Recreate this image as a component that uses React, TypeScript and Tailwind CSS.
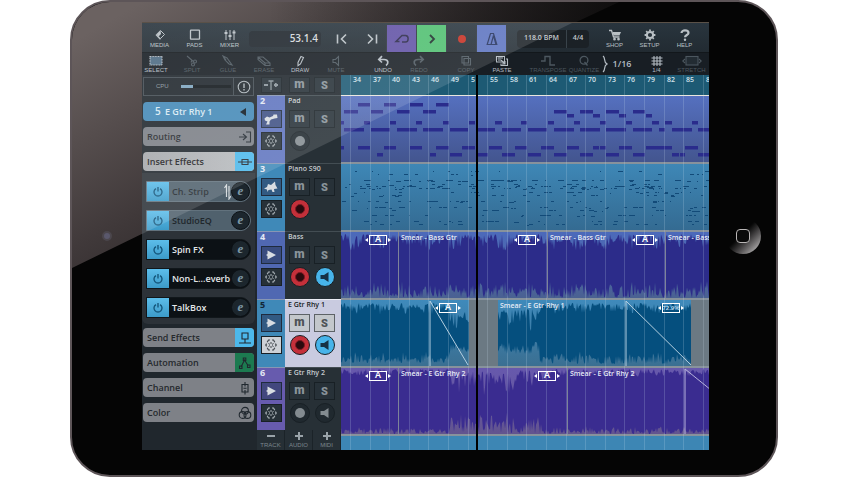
import React from "react";

/* ---------- helpers ---------- */

function seeded(seed: number) {
  let s = seed;
  return () => {
    s = (s * 1664525 + 1013904223) % 4294967296;
    return s / 4294967296;
  };
}

type Band = { from: number; to: number; top: [number, number]; bottom: [number, number] };

function wavePath(bands: Band[], seed: number) {
  const rnd = seeded(seed);
  const up: string[] = [];
  const down: string[] = [];
  bands.forEach((b) => {
    for (let x = b.from; x <= b.to; x += 1) {
      const swell = 0.8 + 0.2 * Math.sin(x / 4 + seed);
      const t = b.top[0] + (b.top[1] - b.top[0]) * Math.pow(rnd(), 1.3) * swell;
      const d = b.bottom[1] - (b.bottom[1] - b.bottom[0]) * Math.pow(rnd(), 1.3) * swell;
      up.push(`${x} ${t.toFixed(1)}`);
      down.unshift(`${x} ${d.toFixed(1)}`);
    }
  });
  return `M${up.join("L")}L${down.join("L")}Z`;
}

/* ---------- toolbar ---------- */

const tiny = "text-[6px] leading-[7px] whitespace-nowrap";

function TopItem({ label, children }: { label: string; children: React.ReactNode }) {
  return (
    <button className="flex w-[35px] flex-col items-center gap-px text-[#b9c0c5]">
      <svg viewBox="0 0 14 12" className="h-3 w-3.5" fill="none" stroke="currentColor" strokeWidth="1.3">
        {children}
      </svg>
      <span className={tiny}>{label}</span>
    </button>
  );
}

function Transport({ label, className = "", children }: { label: string; className?: string; children: React.ReactNode }) {
  return (
    <button aria-label={label} className={`flex h-[27px] w-[30px] items-center justify-center border-r border-[#2c343b] ${className}`}>
      <svg viewBox="0 0 16 16" className="h-4 w-4" fill="none" stroke="currentColor" strokeWidth="1.6">
        {children}
      </svg>
    </button>
  );
}

function TopBar() {
  return (
    <div className="flex h-[29px] items-center bg-linear-to-b from-[#29353e] to-[#222b32] pt-0.5">
      <TopItem label="MEDIA">
        <path d="M7.5 1.5 11.5 5.5 7.5 9.5" strokeWidth="1" />
        <path d="M7.5 1 3.5 5 5.5 7.5 8 5Z" fill="currentColor" stroke="none" />
        <path d="M3 5.5 7.5 10.3" strokeWidth="1.4" />
      </TopItem>
      <TopItem label="PADS">
        <rect x="2.5" y="1.2" width="9" height="9" rx="0.5" />
      </TopItem>
      <TopItem label="MIXER">
        <path d="M3 1V11M7 1V11M11 1V11" strokeWidth="1" />
        <path d="M1.5 4H4.5M5.5 7H8.5M9.5 3.5H12.5" strokeWidth="2" />
      </TopItem>
      <output className="ml-0.5 flex h-4 w-[72px] items-center justify-end rounded-sm bg-[#1f262d] pr-[3px] font-['Open_Sans',sans-serif] text-[10px] font-semibold text-[#d5d9dc]">
        53.1.4
      </output>
      <div className="ml-1.5 flex text-[#b9c0c5]">
        <Transport label="Previous" className="border-transparent">
          <path d="M3.5 3.5V12.5M12 3.5 7.5 8 12 12.5" />
        </Transport>
        <Transport label="Next">
          <path d="M12.5 3.5V12.5M4 3.5 8.5 8 4 12.5" />
        </Transport>
        <Transport label="Cycle" className="bg-[#6152a5] text-[#2a2849]">
          <path d="M8 11H11.5C15 11 15 4.5 11.5 4.5H8L2 10.5H5.5" strokeWidth="1.5" />
        </Transport>
        <Transport label="Play" className="bg-[#4fbf70] text-[#1d2d2b]">
          <path d="M6 4 10 8 6 12" strokeWidth="1.8" />
        </Transport>
        <Transport label="Record" className="text-[#c62f22]">
          <circle cx="8" cy="8" r="3.2" fill="currentColor" />
        </Transport>
        <Transport label="Metronome" className="bg-[#5c73c0] text-[#22305c]">
          <path d="M6.5 2.5H9.5L12.8 13.5H3.2ZM7 13.5 9.5 4.5M9.5 4.5 12 13.5" strokeWidth="1.2" />
        </Transport>
      </div>
      <div className="ml-2.5 flex h-[18px] w-[72px] items-center rounded-sm bg-[#1b2126] font-['Open_Sans',sans-serif] text-[7px] font-semibold text-[#c3c8cc]">
        <span className="flex-1 whitespace-nowrap text-center">118.0 BPM</span>
        <span className="h-full w-px bg-[#39434a]" />
        <span className="w-[22px] text-center">4/4</span>
      </div>
      <div className="ml-auto mr-[7px] flex">
        <TopItem label="SHOP">
          <path d="M1 1.5H3.5L5.5 8H11.5" />
          <path d="M4.5 3H13L11.5 6.5H5.5Z" fill="currentColor" stroke="none" />
          <circle cx="6.5" cy="10.2" r="0.7" fill="currentColor" />
          <circle cx="10.5" cy="10.2" r="0.7" fill="currentColor" />
        </TopItem>
        <TopItem label="SETUP">
          <circle cx="7" cy="6" r="3.1" strokeWidth="2" />
          <path d="M7 .6V2M7 10V11.4M1.6 6H3M11 6H12.4M3.2 2.2 4.2 3.2M9.8 8.8 10.8 9.8M3.2 9.8 4.2 8.8M9.8 3.2 10.8 2.2" strokeWidth="1.8" />
        </TopItem>
        <TopItem label="HELP">
          <path d="M3.5 4C3.5 .6 10.5 .6 10.5 4 10.5 6 7 6 7 8.3" strokeWidth="2.2" />
          <circle cx="7" cy="10.7" r="1.2" fill="currentColor" stroke="none" />
        </TopItem>
      </div>
    </div>
  );
}

function Tool({
  label,
  on = false,
  className = "w-9",
  children,
}: {
  label: string;
  on?: boolean;
  className?: string;
  children: React.ReactNode;
}) {
  return (
    <button className={`flex flex-col items-center ${on ? "text-[#b4bcc3]" : "text-[#4c575f]"} ${className}`}>
      <svg viewBox="0 0 20 12" className="h-3 w-5" fill="none" stroke="currentColor" strokeWidth="1.1">
        {children}
      </svg>
      <span className={tiny}>{label}</span>
    </button>
  );
}

function ToolBar() {
  return (
    <div className="flex h-[23px] items-center overflow-hidden border-t border-[#12171b] bg-[#181e24]">
      <Tool label="SELECT" on className="w-7">
        <rect x="4" y="1.5" width="12" height="8.5" fill="#4d6b83" strokeDasharray="1 0.6" />
      </Tool>
      <div className="ml-1 flex">
        <Tool label="SPLIT">
          <path d="M5 1 12 7M9 7.5 10 5" />
          <circle cx="13" cy="6.5" r="1.5" />
          <circle cx="11" cy="9.5" r="1.5" />
        </Tool>
        <Tool label="GLUE">
          <path d="M5 1 9 3 14 10 11 9 7 5ZM5 1 8 5" />
        </Tool>
        <Tool label="ERASE">
          <path d="M4 2H9L16 8V10.5H11L4 4.5ZM4 2 11 8H16M11 8V10" />
        </Tool>
        <Tool label="DRAW" on>
          <path d="M11 1.5 13.5 2.5 10.5 9 8 10.8 8 7.5Z" />
        </Tool>
        <Tool label="MUTE">
          <path d="M7 4.5H9.5L12.5 1.5V10.5L9.5 7.5H7Z" />
        </Tool>
      </div>
      <div className="ml-[11px] flex">
        <Tool label="UNDO" on>
          <path d="M6 4.5H11C16 4.5 15.5 9 13 10.5M9 1.2 5.8 4.5 9 7.5" strokeWidth="1.7" />
        </Tool>
        <Tool label="REDO">
          <path d="M14 4.5H9C4 4.5 4.5 9 7 10.5M11 1.2 14.2 4.5 11 7.5" strokeWidth="1.7" />
        </Tool>
      </div>
      <div className="ml-[11px] flex">
        <Tool label="COPY">
          <path d="M6 1.5H12.5V8H6ZM8 3.5H14.5V10H8Z" />
        </Tool>
        <Tool label="PASTE" on>
          <path d="M4.5 1.5H12.5V7H4.5ZM14 4H15.5V10.5H9V8.5" />
          <path d="M6 3H11M6 5H9M9 5 13 9M13 6V9H10" />
        </Tool>
      </div>
      <div className="ml-2.5 flex">
        <Tool label="TRANSPOSE">
          <path d="M3 6H7V1.5H12V10H17" strokeWidth="1.4" />
        </Tool>
        <Tool label="QUANTIZE">
          <circle cx="10" cy="5.2" r="3.9" strokeWidth="1.3" />
          <path d="M10.5 7 13.5 10.5" strokeWidth="1.3" />
        </Tool>
      </div>
      <svg viewBox="0 0 6 18" className="h-[18px] w-1.5 text-[#b4bcc3]" fill="none" stroke="currentColor">
        <path d="M1 1C4 3 1 7 5 9 1 11 4 15 1 17" strokeWidth="1.2" />
      </svg>
      <span className="w-7 text-center font-['Open_Sans',sans-serif] text-[9px] font-semibold text-[#b4bcc3]">1/16</span>
      <div className="flex flex-1 justify-end">
        <Tool label="1/4" on className="w-[35px]">
          <path d="M7 1V11M10 1V11M13 1V11M4.5 3H15.5M4.5 6H15.5M4.5 9H15.5" />
        </Tool>
        <Tool label="STRETCH" className="w-[35px]">
          <rect x="4" y="1.5" width="12" height="8.5" fill="#232c33" />
          <path d="M3 4 .8 6 3 8M17 4 19.2 6 17 8" />
        </Tool>
      </div>
    </div>
  );
}

/* ---------- inspector ---------- */

function Section({ label, tone, badge, children }: { label: string; tone: string; badge?: string; children: React.ReactNode }) {
  return (
    <button className={`flex h-[19px] shrink-0 items-center overflow-hidden rounded-[4px] pl-1 font-['Open_Sans',sans-serif] text-[9px] font-semibold ${tone}`}>
      <span className="flex-1 text-left">{label}</span>
      <span className={`flex h-full w-[19px] items-center justify-center ${badge ?? ""}`}>
        <svg viewBox="0 0 14 14" className="h-3.5 w-3.5 text-[#20282f]" fill="none" stroke="currentColor" strokeWidth="1.1">
          {children}
        </svg>
      </span>
    </button>
  );
}

function Effect({ name, idle = false, strip = false }: { name: string; idle?: boolean; strip?: boolean }) {
  return (
    <div
      className={`flex h-[21px] items-center rounded-r-full border ${
        idle ? "border-[#62727d] bg-[#50616d] text-[#20272c]" : "border-[#11171b] bg-[#0c1115] text-[#e4e7e9]"
      }`}
    >
      <button aria-label={`Bypass ${name}`} className="flex h-full w-[22px] items-center justify-center bg-linear-to-b from-[#5cbdea] to-[#3c9bc9] text-[#15577c]">
        <svg viewBox="0 0 12 12" className="h-3 w-3" fill="none" stroke="currentColor" strokeWidth="1.4">
          <path d="M4 2.6A4 4 0 1 0 8 2.6M6 1V5.5" />
        </svg>
      </button>
      <span className="flex-1 whitespace-nowrap pl-[3px] font-['Open_Sans',sans-serif] text-[9px] font-semibold">{name}</span>
      {strip && (
        <svg viewBox="0 0 7 16" className="h-4 w-[7px] text-[#d6dbde]" fill="none" stroke="currentColor" strokeWidth="1.2">
          <path d="M2.5 13V1L.5 4M5 2V15L7 12" />
        </svg>
      )}
      <button
        aria-label={`Edit ${name}`}
        className="flex h-[19px] w-[19px] items-center justify-center rounded-full border border-[#0c1115] bg-[#1c262d] pb-0.5 font-['Liberation_Serif',serif] text-[13px] leading-none font-bold text-[#7d96a5] italic"
      >
        e
      </button>
    </div>
  );
}

function Inspector() {
  return (
    <aside className="flex w-[115px] shrink-0 flex-col bg-[#20272d] pr-[3px] pl-px pt-0.5">
      <div className="flex h-[19px] items-center border border-[#434c53] pl-3">
        <label htmlFor="cpu" className={`${tiny} text-[#8c979f]`}>
          CPU
        </label>
        <div id="cpu" role="meter" aria-valuenow={24} className="ml-3 h-[3px] w-[50px] bg-[#11171b]">
          <div className="h-full w-3 bg-[#7ea5bf]" />
        </div>
        <button aria-label="Panic" className="ml-auto flex h-full w-5 items-center justify-center border-l border-[#434c53] text-[#adb5ba]">
          <svg viewBox="0 0 14 14" className="h-3.5 w-3.5" fill="none" stroke="currentColor" strokeWidth="1.1">
            <circle cx="7" cy="7" r="5.8" />
            <path d="M7 3.5V8M7 9V10.5" strokeWidth="1.4" />
          </svg>
        </button>
      </div>
      <div className="mt-1.5 flex flex-col gap-1.5">
        <button className="flex h-[19px] items-center rounded-[4px] bg-[#4489b7] pr-2 pl-3 font-['Open_Sans',sans-serif] font-semibold text-[#d9e9f3]">
          <span className="w-2.5 text-left text-[10px]">5</span>
          <span className="text-[9px]">E Gtr Rhy 1</span>
          <svg viewBox="0 0 6 8" className="ml-auto h-2 w-1.5 text-[#101a22]" fill="currentColor">
            <path d="M6 0V8L0 4Z" />
          </svg>
        </button>
        <Section label="Routing" tone="bg-[#7b7f86] text-[#26292d]">
          <path d="M1 7H8M5 4 8.5 7 5 10M8 2H12.5V12H8" />
        </Section>
        <Section label="Insert Effects" tone="bg-linear-to-r from-[#a5a8ab] to-[#b9bcbf] text-[#1d2023]" badge="bg-[#4cb8ea]">
          <path d="M0 7H14M4 4.5H10V9.5H4Z" />
        </Section>
      </div>
      <div className="-mx-px mt-0.5 mb-1 flex flex-col gap-2 rounded-b-md bg-[#2c3238] px-1 pt-2 pb-1.5">
        <Effect name="Ch. Strip" idle strip />
        <Effect name="StudioEQ" idle />
        <Effect name="Spin FX" />
        <Effect name="Non-L...everb" />
        <Effect name="TalkBox" />
      </div>
      <div className="flex flex-col gap-1.5">
        <Section label="Send Effects" tone="bg-[#7e8187] text-[#25292d]" badge="bg-[#4cb8ea]">
          <path d="M4 2H10V8H4ZM7 8V12M1 12H13" />
        </Section>
        <Section label="Automation" tone="bg-[#7e8187] text-[#25292d]" badge="bg-[#1c7a50]">
          <path d="M3 11 6.5 4 10 9.5" />
          <path d="M1.5 10H4V12.5H1.5ZM5.3 2H7.8V4.5H5.3ZM9.5 9H12V11.5H9.5Z" />
        </Section>
        <Section label="Channel" tone="bg-[#7e8187] text-[#25292d]">
          <path d="M4 3.5H10V11H4ZM7 1V5.5M7 9V13.5M5.5 7.2H8.5" />
        </Section>
        <Section label="Color" tone="bg-[#7e8187] text-[#25292d]">
          <circle cx="7" cy="4.8" r="3.4" />
          <circle cx="4.6" cy="9" r="3.4" />
          <circle cx="9.4" cy="9" r="3.4" />
        </Section>
      </div>
    </aside>
  );
}

/* ---------- track list ---------- */

type Track = {
  n: number;
  name: string;
  strip: string;
  icon: "trumpet" | "piano" | "audio";
  armed: boolean;
  monitor: "none" | "on" | "off";
  selected?: boolean;
};

const tracks: Track[] = [
  { n: 2, name: "Pad", strip: "bg-[#5f74bf]", icon: "trumpet", armed: false, monitor: "none" },
  { n: 3, name: "Piano S90", strip: "bg-[#3f89b8]", icon: "piano", armed: true, monitor: "none" },
  { n: 4, name: "Bass", strip: "bg-[#5068b2]", icon: "audio", armed: true, monitor: "on" },
  { n: 5, name: "E Gtr Rhy 1", strip: "bg-[#3f89b8]", icon: "audio", armed: true, monitor: "on", selected: true },
  { n: 6, name: "E Gtr Rhy 2", strip: "bg-[#675bae]", icon: "audio", armed: false, monitor: "off" },
];

function Letter({ children, light = false, small = false }: { children: string; light?: boolean; small?: boolean }) {
  return (
    <button
      className={`flex w-[21px] items-center justify-center border font-['Roboto',sans-serif] font-black leading-none ${
        small ? "h-4" : "h-[18px]"
      } ${children === "m" ? "pb-0.5 text-[12px]" : "text-[11px]"} ${
        light ? "border-[#5d6267] bg-[#c3c7cc] text-[#4d5257]" : "border-[#182025] bg-[#273138] text-[#8a949b]"
      }`}
    >
      {children}
    </button>
  );
}

function TrackIcon({ kind }: { kind: Track["icon"] }) {
  return (
    <svg viewBox="0 0 16 14" className="h-3.5 w-4 text-[#d8dde2]" fill="currentColor">
      {kind === "audio" && <path d="M4.5 2.5 13 7 4.5 11.5V8L3 7 4.5 6Z" />}
      {kind === "trumpet" && <path d="M1.5 6.5 4 4.5 6.5 5.5 10 4 10.5 2.5 14 2.5 14.5 6 11.5 6.5 8 7.5 6.5 9.5 6.5 12.5 3 12.5 4.5 9.5 2 8.5Z" />}
      {kind === "piano" && <path d="M1 8.5 4 7 5 4 8 5 12 1.5 12.5 5 14.5 8.5 11 9 11.5 12 9.5 12 8.5 9.5 5.5 10 4.5 12 4 9.5Z" />}
    </svg>
  );
}

function TrackRow({ t }: { t: Track }) {
  const light = t.selected ?? false;
  const circle = "flex h-5 w-5 items-center justify-center rounded-full border border-[#182025]";
  return (
    <li className="flex h-[68px] shrink-0 last:h-[63px]">
      <div className={`flex w-7 flex-col items-center border-t border-[#8796b4] ${t.strip}`}>
        <span className={`h-3.5 w-full pl-[3px] font-['Open_Sans',sans-serif] text-[9px] leading-[10px] font-bold ${light ? "text-[#122736]" : "text-[#e3e8f4]"}`}>
          {t.n}
        </span>
        <button aria-label={`${t.name} instrument`} className="flex h-[18px] w-[21px] items-center justify-center border border-[#1f2b3d] bg-[#2a3a5e]/60">
          <TrackIcon kind={t.icon} />
        </button>
        <button
          aria-label={`${t.name} freeze`}
          className={`mt-1 flex h-[18px] w-[21px] items-center justify-center border border-[#182025] ${light ? "bg-[#cdd1d6] text-[#42484d]" : "bg-[#273138] text-[#a9b1b6]"}`}
        >
          <svg viewBox="0 0 14 14" className="h-3.5 w-3.5" fill="none" stroke="currentColor" strokeWidth="1.2">
            <path d="M6 2H4.5L3.2 4.2M8 2H9.5L10.8 4.2M2.6 5.6 1.8 7 2.6 8.4M11.4 5.6 12.2 7 11.4 8.4M3.2 9.8 4.5 12H6M10.8 9.8 9.5 12H8" />
            <path d="M7 4V6M7 8V10M4.4 5.5 6 6.4M9.6 5.5 8 6.4M4.4 8.5 6 7.6M9.6 8.5 8 7.6" strokeWidth="1" />
          </svg>
        </button>
      </div>
      <div className={`w-14 border-t ${light ? "border-[#eceef5] bg-[#c9cbe0]" : "border-[#434d53] bg-[#273036]"}`}>
        <div
          className={`h-3.5 overflow-hidden pl-[3px] font-['Open_Sans',sans-serif] text-[7px] leading-[10px] font-semibold whitespace-nowrap ${
            light ? "text-[#16191c]" : "text-[#c6cbcf]"
          }`}
        >
          {t.name}
        </div>
        <div className="flex gap-1 pl-1">
          <Letter light={light}>m</Letter>
          <Letter light={light}>S</Letter>
        </div>
        <div className="mt-[3px] flex gap-[5px] pl-[5px]">
          <button aria-label={`Arm ${t.name}`} className={`${circle} ${t.armed ? "bg-[#c4303a]" : "bg-[#20292f]"}`}>
            <span className={`h-2.5 w-2.5 rounded-full ${t.armed ? "border border-[#7a1a22] bg-[#2a0a0e]" : "bg-[#838b90]"}`} />
          </button>
          {t.monitor !== "none" && (
            <button aria-label={`Monitor ${t.name}`} className={`${circle} ${t.monitor === "on" ? "bg-[#47b4ea] text-[#163145]" : "bg-[#20292f] text-[#838b90]"}`}>
              <svg viewBox="0 0 12 12" className="h-3 w-3" fill="currentColor">
                <path d="M1.5 4H5L9.5 1V11L5 8H1.5Z" />
              </svg>
            </button>
          )}
        </div>
      </div>
    </li>
  );
}

function TrackList() {
  return (
    <section className="flex w-[84px] shrink-0 flex-col bg-[#20272d]">
      <div className="flex h-5 items-center">
        <div className="flex w-7 justify-center">
          <button aria-label="Align" className="flex h-4 w-[21px] items-center justify-center border border-[#182025] bg-[#273138] text-[#8b969c]">
            <svg viewBox="0 0 16 12" className="h-3 w-4" fill="none" stroke="currentColor" strokeWidth="1.3">
              <path d="M8 2V11M5.5 2H10.5" />
              <path d="M1 6H5M11 6H15M12.8 4V8" strokeWidth="1.8" />
            </svg>
          </button>
        </div>
        <div className="flex gap-1 pl-1">
          <Letter small>m</Letter>
          <Letter small>S</Letter>
        </div>
      </div>
      <ul>
        {tracks.map((t) => (
          <TrackRow key={t.n} t={t} />
        ))}
      </ul>
      <div className="flex flex-1 bg-[#262f35]">
        {[
          ["M0 4H8", "TRACK"],
          ["M0 4H8M4 0V8", "AUDIO"],
          ["M0 4H8M4 0V8", "MIDI"],
        ].map(([sign, label]) => (
          <button key={label} className="flex w-7 flex-col items-center justify-center gap-0.5 border-r border-[#1b2328] text-[#9aa3a9]">
            <svg viewBox="0 0 8 8" className="h-2 w-2" stroke="currentColor" strokeWidth="2">
              <path d={sign} />
            </svg>
            <span className={`${tiny} text-[#7c868d]`}>{label}</span>
          </button>
        ))}
      </div>
    </section>
  );
}

/* ---------- arrangement ---------- */

type Notes = { y: number; spans: [number, number][] };

const padNotes: Notes[] = [
  { y: 7, spans: [[17, 29], [43, 55], [69, 82], [95, 108]] },
  { y: 14, spans: [[3, 17], [30, 42], [56, 69], [82, 95], [213, 226], [239, 252], [265, 278], [292, 304]] },
  { y: 18, spans: [[226, 233], [252, 259], [278, 285], [305, 311]] },
  {
    y: 25,
    spans: [[0, 3], [23, 29], [49, 55], [75, 81], [102, 108], [128, 134], [154, 161], [180, 186], [207, 213], [233, 239], [259, 265], [285, 291], [311, 318], [324, 331], [351, 357]],
  },
  {
    y: 32,
    spans: [[3, 23], [30, 49], [56, 76], [82, 102], [109, 127], [137, 154], [161, 180], [187, 206], [213, 233], [239, 259], [265, 285], [292, 311], [318, 324], [331, 351], [357, 368]],
  },
  {
    y: 50,
    spans: [[0, 3], [17, 29], [43, 55], [69, 81], [95, 108], [121, 134], [148, 161], [174, 186], [200, 213], [226, 238], [252, 258], [259, 265], [278, 291], [305, 331], [344, 357]],
  },
  {
    y: 57,
    spans: [[36, 42], [89, 95], [109, 121], [137, 147], [161, 174], [187, 200], [213, 226], [239, 252], [265, 278], [292, 304], [331, 338], [339, 344], [357, 368]],
  },
];

const pianoNotes = (() => {
  const rnd = seeded(37);
  const rows: [number, number, number][] = [
    [7, 12, 3], [10, 14, 3], [16, 50, 5], [20, 18, 4], [22, 44, 4], [24, 54, 3],
    [28, 26, 3], [31, 20, 3], [37, 34, 3], [43, 36, 3], [46, 20, 4], [51, 26, 5], [57, 22, 4], [60, 20, 4],
  ];
  const out: { x: number; y: number; w: number }[] = [];
  rows.forEach(([y, count, max]) => {
    for (let i = 0; i < count; i += 1) {
      out.push({ x: Math.round(rnd() * 366), y: rnd() > 0.8 ? y + 1 : y, w: 1 + Math.round(rnd() * max) });
    }
  });
  return out;
})();

const bassWave = wavePath([{ from: 0, to: 368, top: [2, 19], bottom: [48, 66] }], 5);
const gtrOneA = wavePath(
  [
    { from: 0, to: 108, top: [3, 15], bottom: [51, 63] },
    { from: 109, to: 128, top: [12, 29], bottom: [43, 52] },
  ],
  11
);
const gtrOneB = wavePath(
  [
    { from: 157, to: 198, top: [9, 31], bottom: [40, 54] },
    { from: 199, to: 350, top: [3, 15], bottom: [51, 64] },
  ],
  23
);
const gtrTwo = wavePath(
  [
    { from: 0, to: 108, top: [1, 9], bottom: [58, 66] },
    { from: 109, to: 174, top: [3, 28], bottom: [42, 65] },
    { from: 175, to: 206, top: [2, 22], bottom: [48, 66] },
    { from: 207, to: 368, top: [1, 9], bottom: [58, 66] },
  ],
  41
);

function Lane({ tone, children }: { tone: string; children: React.ReactNode }) {
  return (
    <div className={`relative h-[68px] shrink-0 overflow-hidden border-b-2 border-[#87929c] ${tone}`}>
      <svg className="absolute inset-0 h-full w-full" fill="currentColor">
        {children}
      </svg>
    </div>
  );
}

function ClipLabel({ x, children }: { x: string; children: string }) {
  return (
    <span className={`absolute top-px font-['Open_Sans',sans-serif] text-[7px] leading-[10px] font-semibold whitespace-nowrap text-[#e8ecf6] ${x}`}>
      {children}
    </span>
  );
}

function Handle({ x, label = "A" }: { x: string; label?: string }) {
  const wide = label.length > 1;
  return (
    <span className={`absolute top-[3px] flex items-center gap-px text-white ${x}`}>
      <svg viewBox="0 0 3 4" className="h-1 w-[3px]" fill="currentColor">
        <path d="M3 0V4L0 2Z" />
      </svg>
      <span className={`flex h-2.5 w-[18px] items-center justify-center border border-white font-['Liberation_Sans',sans-serif] font-bold ${wide ? "text-[6px] text-[#b9dcf0]" : "text-[9px]"}`}>
        {label}
      </span>
      <svg viewBox="0 0 3 4" className="h-1 w-[3px]" fill="currentColor">
        <path d="M0 0V4L3 2Z" />
      </svg>
    </span>
  );
}

function ClipEdge({ x }: { x: number }) {
  return <path d={`M${x}.5 0V66`} stroke="#7d8399" />;
}

const bars = Array.from({ length: 19 }, (_, i) => 34 + i * 3);

function Arrangement() {
  return (
    <section className="relative flex min-w-0 flex-1 flex-col overflow-hidden bg-[#3d86b4]">
      <div className="h-[22px] shrink-0 border-b-2 border-[#e9e6de] bg-[#1d5a74]" />
      <div className="-mt-px">
        <Lane tone="bg-linear-to-b from-[#5570bf] to-[#43558f] text-[#2a2c8c]">
          {padNotes.map((row) => row.spans.map(([a, b]) => <rect key={`${row.y}-${a}`} x={a} y={row.y} width={b - a} height="3.5" />))}
        </Lane>
        <Lane tone="bg-linear-to-b from-[#3e87b6] to-[#346b92] text-[#124a78]">
          {pianoNotes.map((n, i) => (
            <rect key={i} x={n.x} y={n.y} width={n.w} height="1" />
          ))}
        </Lane>
        <div className="relative">
          <Lane tone="bg-linear-to-b from-[#4c6abb] to-[#4a6192] text-[#2c2c8a]">
            <path d={bassWave} />
            <ClipEdge x={57} />
            <ClipEdge x={206} />
            <ClipEdge x={324} />
          </Lane>
          <Handle x="left-[24px]" />
          <ClipLabel x="left-[60px]">Smear - Bass Gtr</ClipLabel>
          <Handle x="left-[173px]" />
          <ClipLabel x="left-[209px]">Smear - Bass Gtr</ClipLabel>
          <Handle x="left-[291px]" />
          <ClipLabel x="left-[327px]">Smear - Bass</ClipLabel>
        </div>
        <div className="relative">
          <Lane tone="bg-linear-to-b from-[#3f8abb] to-[#3a6f92] text-[#054f7e]">
            <path d={gtrOneA} />
            <path d={gtrOneB} />
            <rect x="128" y="0" width="29" height="66" fill="#6b7983" />
            <rect x="350" y="0" width="100%" height="66" fill="#6b7983" />
            <path d="M89 66V1L127 65M285 66V1L350 65" fill="none" stroke="#b5cfe0" />
          </Lane>
          <Handle x="left-[94px]" />
          <ClipLabel x="left-[159px]">Smear - E Gtr Rhy 1</ClipLabel>
          <Handle x="left-[317px]" label="72.9%" />
        </div>
        <div className="relative">
          <Lane tone="bg-linear-to-b from-[#6759ad] to-[#62548f] text-[#3a2c90]">
            <path d={gtrTwo} />
            <ClipEdge x={57} />
            <ClipEdge x={226} />
            <path d="M344 66V1L370 22" fill="none" stroke="#b7b3dc" />
          </Lane>
          <Handle x="left-[24px]" />
          <ClipLabel x="left-[60px]">Smear - E Gtr Rhy 2</ClipLabel>
          <Handle x="left-[193px]" />
          <ClipLabel x="left-[229px]">Smear - E Gtr Rhy 2</ClipLabel>
        </div>
      </div>
      <svg className="pointer-events-none absolute inset-0 h-full w-full">
        {bars.map((bar, i) => (
          <g key={bar}>
            <path d={`M${Math.round(10 + i * 19.6) - 0.5} 0V375`} stroke="#cfe0f0" strokeOpacity="0.2" />
            <text x={Math.round(12 + i * 19.6)} y="7" className="fill-[#d3e2ea] font-['Open_Sans',sans-serif] text-[7px] font-semibold">
              {bar === 52 ? "5" : bar === 88 ? "8" : bar}
            </text>
          </g>
        ))}
      </svg>
      <div className="absolute inset-y-0 left-[135px] w-0.5 bg-black" />
    </section>
  );
}

/* ---------- device ---------- */

export default function App() {
  return (
    <main className="min-h-screen bg-white pr-[72px] pl-[70px] font-['Liberation_Sans',Arial,sans-serif]">
      <div className="relative flex items-stretch overflow-hidden rounded-[40px] border-2 border-[#5d5558] bg-[#050505] pt-5 pb-[25px]">
        <svg className="pointer-events-none absolute inset-0 h-full w-full">
          <defs>
            <linearGradient id="bezel" gradientUnits="userSpaceOnUse" x1="0" y1="40" x2="150" y2="300">
              <stop offset="0" stopColor="#6b6261" />
              <stop offset="0.6" stopColor="#40393a" />
              <stop offset="1" stopColor="#252122" />
            </linearGradient>
            <linearGradient id="fade" x1="0" x2="1" y1="0" y2="0">
              <stop offset="0.35" stopColor="#050505" stopOpacity="0" />
              <stop offset="1" stopColor="#050505" stopOpacity="0.8" />
            </linearGradient>
          </defs>
          <path d="M0 0H560V-6L500 22 0 266Z" fill="url(#bezel)" />
          <rect width="560" height="268" fill="url(#fade)" />
        </svg>
        <div className="relative flex w-[70px] shrink-0 items-center justify-center">
          <span className="h-2.5 w-2.5 rounded-full border-2 border-[#4b464c] bg-[#5a586c]" />
        </div>
        <div className="relative flex min-w-0 flex-1 flex-col overflow-hidden border-t border-[#5a5148]">
          <TopBar />
          <ToolBar />
          <div className="flex h-[375px]">
            <Inspector />
            <TrackList />
            <Arrangement />
          </div>
          <svg className="pointer-events-none absolute inset-0 h-full w-full">
            <defs>
              <linearGradient id="gloss" x1="0" y1="0" x2="1" y2="1">
                <stop offset="0" stopColor="#fff" stopOpacity="0.1" />
                <stop offset="1" stopColor="#fff" stopOpacity="0.16" />
              </linearGradient>
            </defs>
            <path d="M0 0H430L0 211Z" fill="url(#gloss)" />
          </svg>
        </div>
        <div className="relative flex w-[67px] shrink-0 items-center justify-center">
          <button
            aria-label="Home"
            className="flex h-9 w-9 items-center justify-center rounded-full bg-linear-to-br from-[#050505] from-45% via-[#4a4849] via-65% to-[#e0dede]"
          >
            <span className="h-3.5 w-3.5 rounded-[4px] border border-[#b9b6b6] bg-[#0a0a0a]" />
          </button>
        </div>
      </div>
    </main>
  );
}
